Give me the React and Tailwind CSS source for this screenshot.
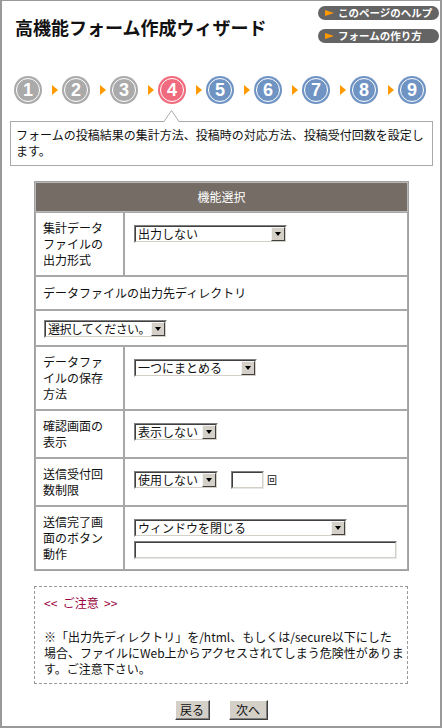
import React from 'react';

const steps = [
  { n: 1, color: 'bg-[#aaaaaa]' },
  { n: 2, color: 'bg-[#aaaaaa]' },
  { n: 3, color: 'bg-[#aaaaaa]' },
  { n: 4, color: 'bg-[#f06b7d]' },
  { n: 5, color: 'bg-[#6f94c3]' },
  { n: 6, color: 'bg-[#6f94c3]' },
  { n: 7, color: 'bg-[#6f94c3]' },
  { n: 8, color: 'bg-[#6f94c3]' },
  { n: 9, color: 'bg-[#6f94c3]' },
];

// Windows-classic style dropdown
const Select = ({ className, textClass = '', children }) => (
  <div className={`flex h-[18px] border border-t-[#808080] border-l-[#808080] border-r-white border-b-white ${className}`}>
    <div className="flex min-w-0 flex-1 border border-t-[#404040] border-l-[#404040] border-r-[#d4d0c8] border-b-[#d4d0c8] bg-white">
      <span className={`min-w-0 flex-1 whitespace-nowrap pl-[2px] text-[12px] leading-[14px] ${textClass}`}>{children}</span>
      <span className="flex w-[14px] shrink-0 items-center justify-center border border-t-[#f4f4f4] border-l-[#f4f4f4] border-r-[#404040] border-b-[#404040] bg-[#d4d0c8]">
        <span className="h-0 w-0 border-x-[3.5px] border-t-[4px] border-x-transparent border-t-black" />
      </span>
    </div>
  </div>
);

const TextBox = ({ className }) => (
  <div className={`h-[18px] border border-t-[#808080] border-l-[#808080] border-r-[#e8e8e8] border-b-[#e8e8e8] ${className}`}>
    <div className="h-full border border-t-[#404040] border-l-[#404040] border-r-[#d4d0c8] border-b-[#d4d0c8] bg-white" />
  </div>
);

const HelpPill = ({ children }) => (
  <div className="flex h-[14px] w-[121px] items-center rounded-full bg-[#646464] pl-[7px]">
    <span className="h-0 w-0 border-y-[3px] border-l-[9px] border-y-transparent border-l-[#ff9900]" />
    <span className="ml-[4px] text-[10.5px] font-bold leading-[14px] text-white">{children}</span>
  </div>
);

const Label = ({ children }) => (
  <div className="w-[89px] shrink-0 border border-[#a8a8a8] py-[7px] pl-[7px] text-[12px] leading-[16px]">{children}</div>
);

const Cell = ({ children }) => (
  <div className="flex-1 border border-[#a8a8a8] pl-[9px] pt-[12px]">{children}</div>
);

const WinButton = ({ className, children }) => (
  <button className={`h-[20px] border border-t-white border-l-white border-r-[#404040] border-b-[#404040] bg-[#d4d0c8] text-[12px] leading-[16px] shadow-[inset_-1px_-1px_0_#808080] ${className}`}>
    {children}
  </button>
);

export default function App() {
  return (
    <div className="h-[728px] w-[442px] border-x-2 border-t border-b-2 border-[#999999] bg-white font-['Noto_Sans_CJK_JP',sans-serif] text-[#111]">
      {/* header */}
      <div className="flex h-[75px] justify-between">
        <h1 className="pl-[13px] pt-[14px] text-[18px] font-bold leading-[24px]">高機能フォーム作成ウィザード</h1>
        <div className="mr-[1px] flex flex-col gap-[9px] pt-[5px]">
          <HelpPill>このページのヘルプ</HelpPill>
          <HelpPill>フォームの作り方</HelpPill>
        </div>
      </div>

      {/* steps */}
      <div className="flex h-[28px] items-center pl-[12px]">
        {steps.map((s, i) => (
          <React.Fragment key={s.n}>
            {i > 0 && <span className="ml-[10px] mr-[4px] h-0 w-0 border-y-[5px] border-l-[6px] border-y-transparent border-l-[#ff9900]" />}
            <div className={`h-[28px] w-[28px] rounded-full p-[2px] ${s.color}`}>
              <div className="flex h-full w-full items-center justify-center rounded-full border border-white font-['Liberation_Sans',sans-serif] text-[18px] font-bold text-white">
                {s.n}
              </div>
            </div>
          </React.Fragment>
        ))}
      </div>

      {/* description bubble */}
      <div className="relative ml-[8px] mt-[17px] w-[423px] border border-[#aaaaaa] pb-[6px] pl-[5px] pt-[5px] text-[12px] leading-[16px]">
        <svg className="absolute left-[153px] top-[-12px]" width="15" height="12" viewBox="0 0 15 12">
          <polygon points="0,12 7.5,0.5 15,12" fill="#fff" />
          <polyline points="0,11.5 7.5,0.5 15,11.5" fill="none" stroke="#aaaaaa" strokeWidth="1" />
        </svg>
        フォームの投稿結果の集計方法、投稿時の対応方法、投稿受付回数を設定し
        <br />
        ます。
      </div>

      {/* settings table */}
      <div className="ml-[32px] mt-[15px] w-[375px] border border-[#a0a0a0] text-[12px]">
        <div className="flex h-[30px] items-center justify-center border border-[#b8b8b8] bg-[#756c65] text-white">機能選択</div>

        <div className="flex">
          <Label>集計データ<br />ファイルの<br />出力形式</Label>
          <Cell><Select className="w-[153px]">出力しない</Select></Cell>
        </div>

        <div className="border border-[#a8a8a8] py-[8px] pl-[7px] leading-[16px]">データファイルの出力先ディレクトリ</div>

        <div className="border border-[#a8a8a8] pb-[7px] pl-[8px] pt-[9px]">
          <Select className="w-[123px]" textClass="tracking-[-0.6px]">選択してください。</Select>
        </div>

        <div className="flex">
          <Label>データファ<br />イルの保存<br />方法</Label>
          <Cell><Select className="w-[123px]">一つにまとめる</Select></Cell>
        </div>

        <div className="flex">
          <Label>確認画面の<br />表示</Label>
          <Cell><Select className="w-[84px]">表示しない</Select></Cell>
        </div>

        <div className="flex">
          <Label>送信受付回<br />数制限</Label>
          <Cell>
            <div className="flex items-center">
              <Select className="w-[84px]">使用しない</Select>
              <TextBox className="ml-[13px] w-[33px]" />
              <span className="ml-[3px] text-[10px] leading-[12px]">回</span>
            </div>
          </Cell>
        </div>

        <div className="flex">
          <Label>送信完了画<br />面のボタン<br />動作</Label>
          <Cell>
            <Select className="w-[213px]">ウィンドウを閉じる</Select>
            <TextBox className="mt-[4px] w-[263px]" />
          </Cell>
        </div>
      </div>

      {/* notice */}
      <div className="ml-[32px] mt-[15px] w-[374px] border border-dashed border-[#999999] pb-[6px] pl-[9px] pt-[8px] text-[12px]">
        <div className="leading-[16px] text-[#99003a]">&lt;&lt;&nbsp; ご注意 &nbsp;&gt;&gt;</div>
        <div className="mt-[18px] whitespace-nowrap leading-[16px]">
          ※「出力先ディレクトリ」を/html、もしくは/secure以下にした
          <br />
          場合、ファイルにWeb上からアクセスされてしまう危険性がありま
          <br />
          す。ご注意下さい。
        </div>
      </div>

      {/* navigation */}
      <div className="mt-[16px] flex justify-center gap-[19px]">
        <WinButton className="w-[35px]">戻る</WinButton>
        <WinButton className="w-[39px]">次へ</WinButton>
      </div>
    </div>
  );
}
